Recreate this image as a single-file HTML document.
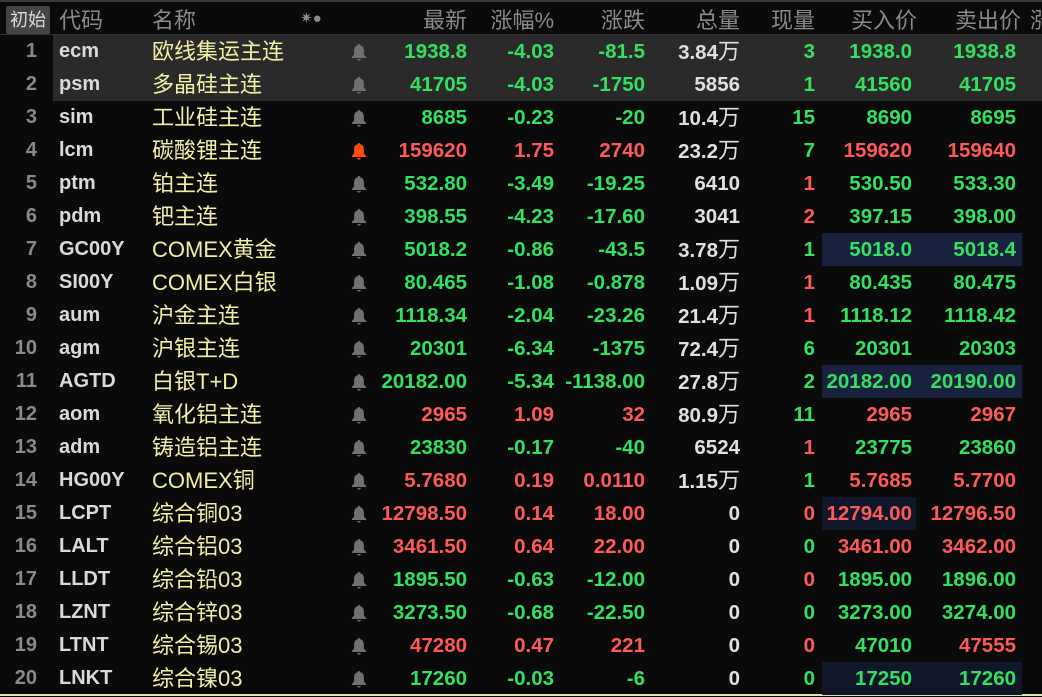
<!DOCTYPE html><html><head><meta charset="utf-8"><style>
body{margin:0;width:1042px;height:697px;background:#0a0a0a;overflow:hidden;position:relative;font-family:"Liberation Sans","Noto Sans CJK SC",sans-serif}
.top{position:absolute;left:0;top:0;width:1042px;height:2px;background:#3a3a3a}
.hdr{position:absolute;left:0;top:2px;width:1042px;height:32px;border-bottom:2px solid #333;color:#8a8a8a;font-size:22px}
.hdr span{position:absolute;top:1px;white-space:nowrap}
.btn{position:absolute;left:6px;top:4px;width:44px;height:28px;background:#444;border-radius:2px;color:#ddd;font-size:18px;text-align:center;line-height:28px}
.row{position:absolute;left:0;width:1042px;height:33px;font-size:20.5px;font-weight:bold;line-height:33px}
.row.sel{background:linear-gradient(90deg,#0a0a0a 53px,#2a2a2a 53px)}
.row span{position:absolute;white-space:nowrap}
.n{color:#8a8a8a;right:1005px;font-size:20px}
.c{left:59px;color:#dadada;font-size:20px}
.m{left:152px;color:#f2f0a4;font-weight:normal;font-size:22px}
.b{left:351px;top:8px;width:16px;height:18px}
.r{color:#ff5a5a}.g{color:#33e060}.w{color:#e0e0e0}
.hl{position:absolute;height:33px;background:#18213e}
.hl2{position:absolute;height:33px;background:#10172a}
.wan{font-weight:normal;font-size:22px}
</style></head><body>
<div class="top"></div>
<div class="hdr"><div class="btn">初始</div>
<span style="left:59px">代码</span><span style="left:152px">名称</span>
<span style="left:300px;font-size:15px;top:7px">✷●</span>
<span style="right:575px">最新</span><span style="right:488px">涨幅%</span><span style="right:397px">涨跌</span><span style="right:302px">总量</span><span style="right:227px">现量</span><span style="right:125px">买入价</span><span style="right:21px">卖出价</span><span style="left:1030px">涨</span>
</div>
<div style="position:absolute;left:0;top:694px;width:1042px;height:2px;background:#e8e4a0"></div>
<div id="rows"></div>
<script>
const D=[
["1","ecm","欧线集运主连",0,"1938.8g","-4.03g","-81.5g","3.84万","3g","1938.0g","1938.8g",0,1],
["2","psm","多晶硅主连",0,"41705g","-4.03g","-1750g","5856","1g","41560g","41705g",0,1],
["3","sim","工业硅主连",0,"8685g","-0.23g","-20g","10.4万","15g","8690g","8695g",0],
["4","lcm","碳酸锂主连",1,"159620r","1.75r","2740r","23.2万","7g","159620r","159640r",0],
["5","ptm","铂主连",0,"532.80g","-3.49g","-19.25g","6410","1r","530.50g","533.30g",0],
["6","pdm","钯主连",0,"398.55g","-4.23g","-17.60g","3041","2r","397.15g","398.00g",0],
["7","GC00Y","COMEX黄金",0,"5018.2g","-0.86g","-43.5g","3.78万","1g","5018.0g","5018.4g",1],
["8","SI00Y","COMEX白银",0,"80.465g","-1.08g","-0.878g","1.09万","1r","80.435g","80.475g",0],
["9","aum","沪金主连",0,"1118.34g","-2.04g","-23.26g","21.4万","1r","1118.12g","1118.42g",0],
["10","agm","沪银主连",0,"20301g","-6.34g","-1375g","72.4万","6g","20301g","20303g",0],
["11","AGTD","白银T+D",0,"20182.00g","-5.34g","-1138.00g","27.8万","2g","20182.00g","20190.00g",1],
["12","aom","氧化铝主连",0,"2965r","1.09r","32r","80.9万","11g","2965r","2967r",0],
["13","adm","铸造铝主连",0,"23830g","-0.17g","-40g","6524","1r","23775g","23860g",0],
["14","HG00Y","COMEX铜",0,"5.7680r","0.19r","0.0110r","1.15万","1g","5.7685r","5.7700r",0],
["15","LCPT","综合铜03",0,"12798.50r","0.14r","18.00r","0","0r","12794.00r","12796.50r",2],
["16","LALT","综合铝03",0,"3461.50r","0.64r","22.00r","0","0g","3461.00r","3462.00r",0],
["17","LLDT","综合铅03",0,"1895.50g","-0.63g","-12.00g","0","0r","1895.00g","1896.00g",0],
["18","LZNT","综合锌03",0,"3273.50g","-0.68g","-22.50g","0","0g","3273.00g","3274.00g",0],
["19","LTNT","综合锡03",0,"47280r","0.47r","221r","0","0r","47010g","47555r",0],
["20","LNKT","综合镍03",0,"17260g","-0.03g","-6g","0","0g","17250g","17260g",3]];
const R=[575,488,397,302,227,130,26];
let h="";
D.forEach((d,i)=>{
 let top=35+i*33;
 h+=`<div class="row${d[12]?' sel':''}" style="top:${top}px">`;
 if(d[11]==1||d[11]==3)h+=`<div class="${d[11]==1?'hl':'hl2'}" style="left:822px;width:200px"></div>`;
 if(d[11]==2)h+=`<div class="hl2" style="left:822px;width:94px"></div>`;
 h+=`<span class="n">${d[0]}</span><span class="c">${d[1]}</span><span class="m">${d[2]}</span>`;
 const bc=d[3]?'#ff4a10':'#707070';
 h+=`<svg class="b" style="position:absolute" viewBox="0 0 14 15"><path d="M7 0.5c0.8 0 1.2 0.5 1.2 1.1C10.5 2.3 11.3 4 11.3 6.5v3.2l2 2.3v0.8H0.7V12l2-2.3V6.5C2.7 4 3.5 2.3 5.8 1.6 5.8 1 6.2 0.5 7 0.5zM5.3 13.6h3.4C8.5 14.5 7.8 15 7 15S5.5 14.5 5.3 13.6z" fill="${bc}"/></svg>`;
 [4,5,6,7,8,9,10].forEach((k,j)=>{
  let v=d[k],cls='w';
  if(k==7){let t=v.endsWith('万')?v.slice(0,-1)+'<span class="wan" style="position:static">万</span>':v;h+=`<span class="w" style="right:${R[j]}px">${t}</span>`;return;}
  cls=v.slice(-1);v=v.slice(0,-1);
  h+=`<span class="${cls}" style="right:${R[j]}px">${v}</span>`;
 });
 h+=`</div>`;
});
document.getElementById('rows').innerHTML=h;
</script>
</body></html>
